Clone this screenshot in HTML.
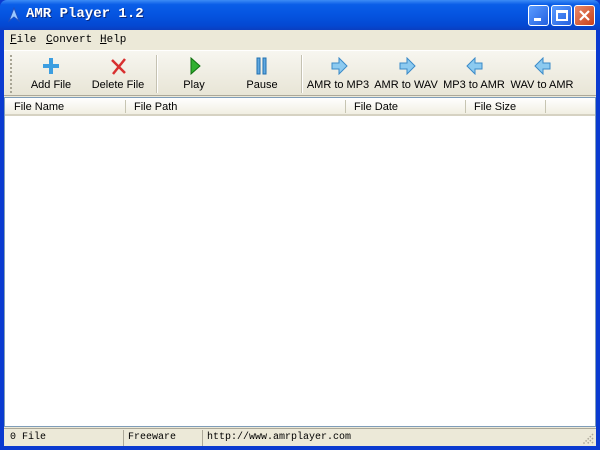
<!DOCTYPE html>
<html><head><meta charset="utf-8"><style>
*{margin:0;padding:0;box-sizing:border-box}
body{width:600px;height:450px;overflow:hidden;background:#0a3ad0;font-family:"Liberation Sans",sans-serif;font-size:11px;position:relative}
.title{position:absolute;left:0;top:0;width:600px;height:30px;background:linear-gradient(#3d8cf5 0%,#0a5ee8 15%,#0554e0 50%,#0448d2 85%,#0a3ec0 100%);border-radius:7px 7px 0 0}
.title .t{position:absolute;left:26px;top:6px;color:#fff;font-family:"Liberation Mono",monospace;font-weight:bold;font-size:14px;text-shadow:1px 1px #0a2a80}
.btn{position:absolute;top:5px;width:21px;height:21px;border:1px solid #fff;border-radius:3px;background:linear-gradient(135deg,#5a9cff,#2460e0)}
.client{position:absolute;left:4px;top:30px;width:592px;height:416px;background:#ece9d8}
.menu{position:absolute;left:0;top:0;width:592px;height:19px;font-family:"Liberation Mono",monospace;font-size:11px}
.menu span{position:absolute;top:4px}
.tb{position:absolute;left:0;top:20px;width:592px;height:46px;border-top:1px solid #fff;border-bottom:1px solid #aca899;background:linear-gradient(#f7f6f0,#e8e5d6)}
.tb .it{position:absolute;font-size:11px;color:#000;transform:translateX(-50%);white-space:nowrap;top:28px}
.tb svg{position:absolute;top:6px}
.sep{position:absolute;top:4px;width:2px;height:38px;border-left:1px solid #c5c2b2;border-right:1px solid #fff}
.list{position:absolute;left:0;top:67px;width:592px;height:330px;background:#fff;border:1px solid #7f9db9}
.hdr{position:absolute;left:0;top:0;width:590px;height:18px;background:linear-gradient(#fff,#f1efe2);border-bottom:2px solid #d6d2c2}
.hdr span{position:absolute;top:3px}
.hdr i{position:absolute;top:2px;width:1px;height:13px;background:#c7c5b2}
.status{position:absolute;left:0;top:398px;width:592px;height:18px;background:#ece9d8;border-top:1px solid #aca899;font-family:"Liberation Mono",monospace;font-size:10px}
.status span{position:absolute;top:3px}
.status i{position:absolute;top:1px;width:1px;height:16px;background:#aca899}
</style></head><body>
<div class="title">
<svg style="position:absolute;left:7px;top:7px" width="14" height="16"><path d="M7 1 L12 14 L7 10 L2 14 Z" fill="#9cc8ff" stroke="#2050c0"/></svg>
<div class="t">AMR Player 1.2</div>
<div class="btn" style="left:528px"><div style="position:absolute;left:5px;top:12px;width:7px;height:3px;background:#fff"></div></div>
<div class="btn" style="left:551px"><div style="position:absolute;left:4px;top:4px;width:12px;height:11px;border:2px solid #fff;border-top-width:3px"></div></div>
<div class="btn" style="left:574px;background:linear-gradient(135deg,#e88a6a,#c8401a)"><svg width="19" height="19"><path d="M5 5L14 14M14 5L5 14" stroke="#fff" stroke-width="2.2"/></svg></div>
</div>
<div class="client">
<div class="menu"><span style="left:6px"><u>F</u>ile</span><span style="left:42px"><u>C</u>onvert</span><span style="left:96px"><u>H</u>elp</span></div>
<div class="tb">
<div style="position:absolute;left:6px;top:4px;width:2px;height:38px;border-left:2px dotted #a8a595"></div>
<svg style="left:38px" width="18" height="18"><path d="M9 1V17M1 9H17" stroke="#3c9ee0" stroke-width="4"/></svg>
<div class="it" style="left:47px">Add File</div>
<svg style="left:106px" width="18" height="18"><path d="M2 3L15 16M15 2L3 17" stroke="#d83030" stroke-width="2.5"/></svg>
<div class="it" style="left:114px">Delete File</div>
<div class="sep" style="left:152px"></div>
<svg style="left:184px" width="14" height="18"><path d="M3 1L12 9L3 17Z" fill="#30b030" stroke="#107010"/></svg>
<div class="it" style="left:190px">Play</div>
<svg style="left:251px" width="14" height="18"><rect x="2" y="1" width="3" height="16" fill="#60a8e0" stroke="#2070b0"/><rect x="8" y="1" width="3" height="16" fill="#60a8e0" stroke="#2070b0"/></svg>
<div class="it" style="left:258px">Pause</div>
<div class="sep" style="left:297px"></div>
<svg style="left:326px" width="18" height="18"><path d="M2 6H9V1L17 9L9 17V12H2Z" fill="#8ccaf0" stroke="#3a8ac8"/></svg>
<div class="it" style="left:334px">AMR to MP3</div>
<svg style="left:394px" width="18" height="18"><path d="M2 6H9V1L17 9L9 17V12H2Z" fill="#8ccaf0" stroke="#3a8ac8"/></svg>
<div class="it" style="left:402px">AMR to WAV</div>
<svg style="left:462px" width="18" height="18"><path d="M16 6H9V1L1 9L9 17V12H16Z" fill="#8ccaf0" stroke="#3a8ac8"/></svg>
<div class="it" style="left:470px">MP3 to AMR</div>
<svg style="left:530px" width="18" height="18"><path d="M16 6H9V1L1 9L9 17V12H16Z" fill="#8ccaf0" stroke="#3a8ac8"/></svg>
<div class="it" style="left:538px">WAV to AMR</div>
</div>
<div class="list"><div class="hdr">
<span style="left:9px">File Name</span><i style="left:120px"></i>
<span style="left:129px">File Path</span><i style="left:340px"></i>
<span style="left:349px">File Date</span><i style="left:460px"></i>
<span style="left:469px">File Size</span><i style="left:540px"></i>
</div></div>
<div class="status">
<span style="left:6px">0 File</span><i style="left:119px"></i>
<span style="left:124px">Freeware</span><i style="left:198px"></i>
<span style="left:203px">http://www.amrplayer.com</span>
<svg style="position:absolute;right:2px;top:4px" width="12" height="12"><path d="M11 1L1 11M11 5L5 11M11 9L9 11" stroke="#aca899" stroke-width="1.5" stroke-dasharray="1.5 1.5"/></svg>
</div>
</div>
</body></html>
